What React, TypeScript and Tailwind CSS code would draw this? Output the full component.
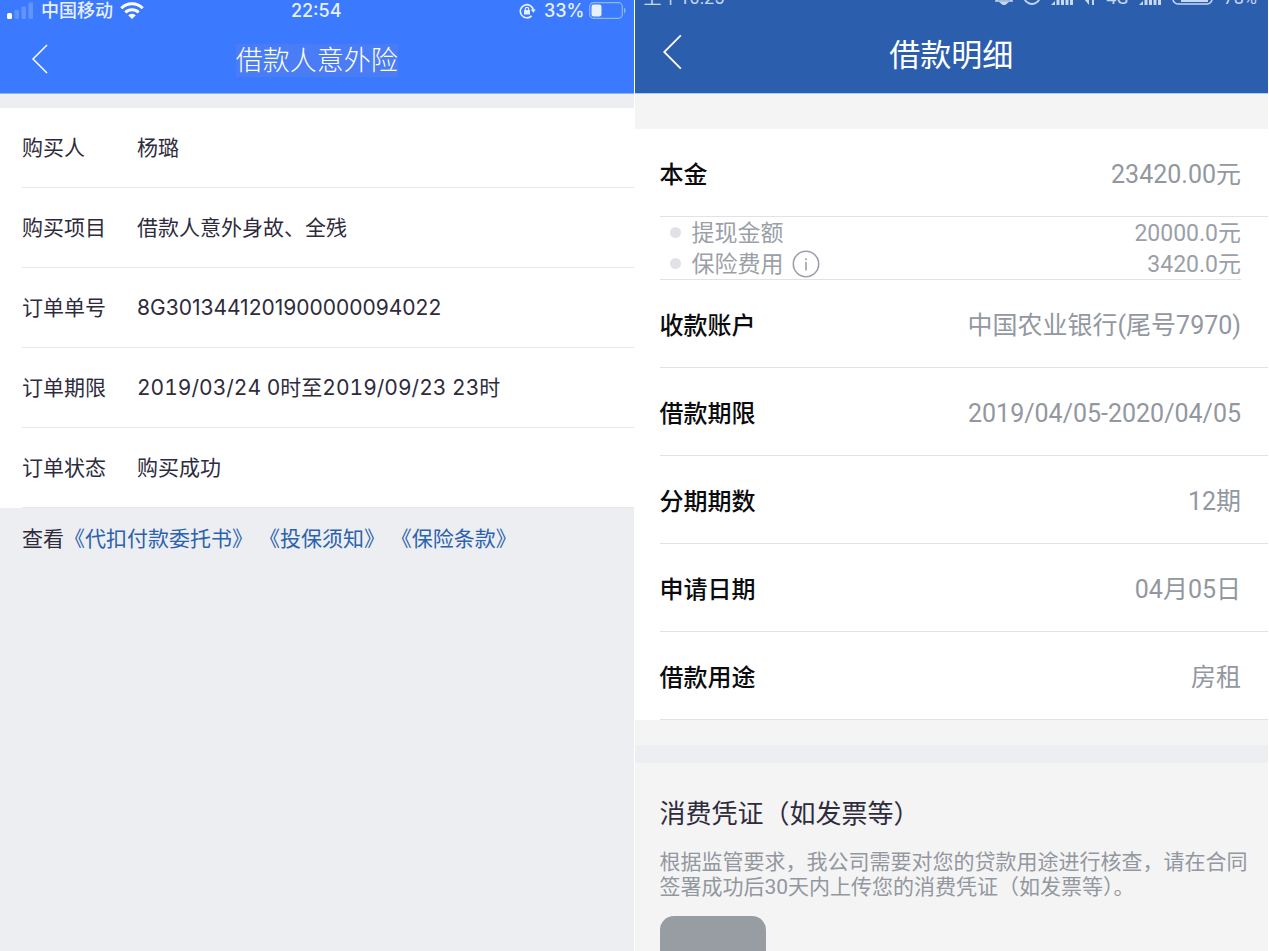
import type { ReactNode } from 'react';

const order = [
  { label: '购买人', value: '杨璐' },
  { label: '购买项目', value: '借款人意外身故、全残' },
  { label: '订单单号', value: '8G3013441201900000094022' },
  { label: '订单期限', value: '2019/03/24 0时至2019/09/23 23时', tabular: true },
  { label: '订单状态', value: '购买成功' },
];

const documents = ['《代扣付款委托书》', '《投保须知》', '《保险条款》'];

const loan = [
  { label: '收款账户', value: '中国农业银行(尾号7970)' },
  { label: '借款期限', value: '2019/04/05-2020/04/05' },
  { label: '分期期数', value: '12期' },
  { label: '申请日期', value: '04月05日' },
  { label: '借款用途', value: '房租' },
];

function Chevron({ className }: { className: string }) {
  return (
    <svg viewBox="0 0 16 30" className={className} fill="none" stroke="currentColor" strokeWidth="1.5">
      <path d="M15 1 1 15l14 14" />
    </svg>
  );
}

function PhoneSignal() {
  return (
    <svg viewBox="0 0 27 17" className="h-[17px] w-[27px]" fill="currentColor">
      <rect x="0" y="11" width="5" height="6" rx="1.5" />
      <rect x="7.5" y="8" width="4.5" height="9" rx="1" opacity=".2" />
      <rect x="14.5" y="4.5" width="4.5" height="12.5" rx="1" opacity=".2" />
      <rect x="21.5" y="0.5" width="4.5" height="16.5" rx="1" opacity=".2" />
    </svg>
  );
}

function Wifi() {
  return (
    <svg viewBox="0 0 24 17" className="h-[17px] w-6" fill="none" stroke="currentColor" strokeWidth="3">
      <path d="M1.3 6.2a15.2 15.2 0 0 1 21.4 0" />
      <path d="M5.3 10.4a9.5 9.5 0 0 1 13.4 0" />
      <path d="M12 17 8.2 13.2a5.4 5.4 0 0 1 7.6 0z" fill="currentColor" stroke="none" />
    </svg>
  );
}

function RotationLock() {
  return (
    <svg viewBox="0 0 17 16" className="h-4 w-[17px]" fill="none" stroke="currentColor" strokeWidth="1.6">
      <path d="M12.6 12.9A6.6 6.6 0 1 1 14.4 7" />
      <path d="M11.8 6.4h5l-2.5 3.4z" fill="currentColor" stroke="none" />
      <rect x="5" y="7" width="6" height="4.6" rx=".6" fill="currentColor" stroke="none" />
      <path d="M6.3 7.4V6a1.7 1.7 0 0 1 3.4 0v1.4" strokeWidth="1.2" />
    </svg>
  );
}

function Battery() {
  return (
    <svg viewBox="0 0 37 17" className="h-[17px] w-[37px]" fill="none">
      <rect x=".7" y=".7" width="32.6" height="15.6" rx="4" stroke="currentColor" strokeWidth="1.2" opacity=".5" />
      <rect x="2.5" y="2.5" width="10" height="12" rx="2.2" fill="currentColor" />
      <path d="M35 5.5c2 1 2 5 0 6z" fill="currentColor" opacity=".5" />
    </svg>
  );
}

function CellBars() {
  return (
    <svg viewBox="0 0 23 20" className="h-5 w-[23px]" fill="currentColor">
      <path d="M0 20 4 16v4zM5.5 14h3v6h-3zM10 10h3v10h-3zM14.5 6h3v14h-3zM19 2h3v18h-3z" />
    </svg>
  );
}

function Row({ label, children }: { label: string; children: ReactNode }) {
  return (
    <div className="flex h-[88px] items-center justify-between border-b border-[#e2e2e4] pt-1 pr-[27px] text-[25px]">
      <dt className="text-2xl font-medium text-[#0b0b0d]">{label}</dt>
      <dd className="text-[#93979f]">{children}</dd>
    </div>
  );
}

function SubRow({ label, value, info }: { label: string; value: string; info?: boolean }) {
  return (
    <div className="flex h-[31px] items-center justify-between pt-1 text-[23px] text-[#9b9fa7]">
      <dt className="flex items-center">
        <span className="mr-[11px] mb-1 ml-2.5 size-[11px] rounded-full bg-[#e1e2e5]" />
        {label}
        {info && (
          <button type="button" aria-label="保险费用说明" className="mb-1 ml-2">
            <svg viewBox="0 0 28 28" className="size-7" fill="none" stroke="currentColor" strokeWidth="1.6">
              <circle cx="14" cy="14" r="12.7" />
              <path d="M14 12v8.5M14 8.2v2" />
            </svg>
          </button>
        )}
      </dt>
      <dd>{value}</dd>
    </div>
  );
}

function InsurancePanel() {
  return (
    <section className="min-w-0 flex-1 bg-[#edeef2] font-['Inter','Noto_Sans_CJK_SC',sans-serif]">
      <header className="border-b border-[#8ab4fb] bg-[#3b7aff] text-white">
        <div className="grid h-[21px] grid-cols-3 items-center pr-2 pl-[7px] text-lg leading-5 font-medium">
          <div className="flex items-center gap-[7px]">
            <PhoneSignal />
            <span className="text-[#e6f0ff]">中国移动</span>
            <Wifi />
          </div>
          <span className="text-center text-[#e6f0ff]">22:54</span>
          <div className="flex items-center justify-end gap-1 text-[#e6f0ff]">
            <RotationLock />
            <span className="ml-1">33%</span>
            <Battery />
          </div>
        </div>
        <div className="flex h-[72px] items-center pt-1">
          <button type="button" aria-label="返回" className="w-20 pl-8">
            <Chevron className="h-[30px] w-4" />
          </button>
          <h1 className="flex-1 pt-1 text-center text-[27px] leading-10 font-light">
            <span className="bg-[#4a7df5]">借款人意外险</span>
          </h1>
          <span className="w-20" />
        </div>
      </header>

      <dl className="mt-3.5 bg-white pl-[22px] text-[21px] text-[#2e2c3c]">
        {order.map((item) => (
          <div key={item.label} className="flex h-20 items-center border-b border-[#e9e9ec] pt-px">
            <dt className="w-[115px] shrink-0">{item.label}</dt>
            <dd className={item.tabular ? 'tabular-nums' : undefined}>{item.value}</dd>
          </div>
        ))}
      </dl>

      <p className="px-[22px] pt-[15px] text-[21px] leading-8 text-[#2e2c3c]">
        查看
        {documents.map((name) => (
          <span key={name}>
            <a href="#" className="text-[#2a62ad]">
              {name}
            </a>{' '}
          </span>
        ))}
      </p>
    </section>
  );
}

function LoanPanel() {
  return (
    <section className="min-w-0 flex-1 bg-[#f4f4f4] font-['Roboto','Noto_Sans_CJK_SC',sans-serif]">
      <header className="border-b border-[#a9cbfa] bg-[#2c5eae] text-white">
        {/* the status bar is scrolled mostly out of view */}
        <div className="flex h-[5px] items-end justify-between overflow-hidden pr-[11px] pl-[9px] text-lg leading-[14px] text-[#c5d8f5]">
          <span>上午10:25</span>
          <div className="flex items-end gap-2.5">
            <svg viewBox="0 0 18 20" className="h-5 w-[18px]" fill="none" stroke="currentColor" strokeWidth="1.6">
              <path d="M1 16h16l-3-4V7a5 5 0 0 0-10 0v5z" />
              <path d="M6 17.5h6l-3 2.5z" fill="currentColor" />
            </svg>
            <svg viewBox="0 0 18 20" className="h-5 w-[18px]" fill="none" stroke="currentColor" strokeWidth="1.8">
              <circle cx="9" cy="11" r="8" />
            </svg>
            <CellBars />
            <svg viewBox="0 0 12 20" className="h-5 w-3" fill="currentColor">
              <path d="M0 14h5v6zM8 6h2v14H8z" />
            </svg>
            <span>4G</span>
            <CellBars />
            <svg viewBox="0 0 42 20" className="h-5 w-[42px]" fill="none">
              <rect x="1" y="1" width="39" height="18" rx="5" stroke="currentColor" strokeWidth="1.6" />
              <rect x="9" y="4" width="27" height="13" fill="currentColor" />
            </svg>
            <span>78%</span>
          </div>
        </div>
        <div className="flex h-[88px] items-center pt-1.5">
          <button type="button" aria-label="返回" className="w-20 pl-7">
            <Chevron className="h-9 w-[19px]" />
          </button>
          <h1 className="flex-1 pt-2 text-center text-[31px] leading-10">借款明细</h1>
          <span className="w-20" />
        </div>
      </header>

      <dl className="mt-[35px] bg-white pl-[25px]">
        <Row label="本金">23420.00元</Row>
        <div className="mr-[27px] border-b border-[#e2e2e4]">
          <SubRow label="提现金额" value="20000.0元" />
          <SubRow label="保险费用" value="3420.0元" info />
        </div>
        {loan.map((item) => (
          <Row key={item.label} label={item.label}>
            {item.value}
          </Row>
        ))}
      </dl>

      <div className="mt-[25px] h-[18px] bg-[#edeef2]" />

      <div className="pt-[35px] pr-5 pl-[25px]">
        <h2 className="text-[26px] leading-8 text-[#2e2c3c]">消费凭证（如发票等）</h2>
        <p className="mt-5 text-[21px] leading-[25px] text-[#93979f]">
          根据监管要求，我公司需要对您的贷款用途进行核查，请在合同签署成功后30天内上传您的消费凭证（如发票等）。
        </p>
        <button type="button" aria-label="上传凭证" className="mt-4 block size-[106px] rounded-[14px] bg-[#989da4]" />
      </div>
    </section>
  );
}

export default function App() {
  return (
    <main className="flex h-screen gap-px overflow-hidden bg-white pr-px">
      <InsurancePanel />
      <LoanPanel />
    </main>
  );
}
